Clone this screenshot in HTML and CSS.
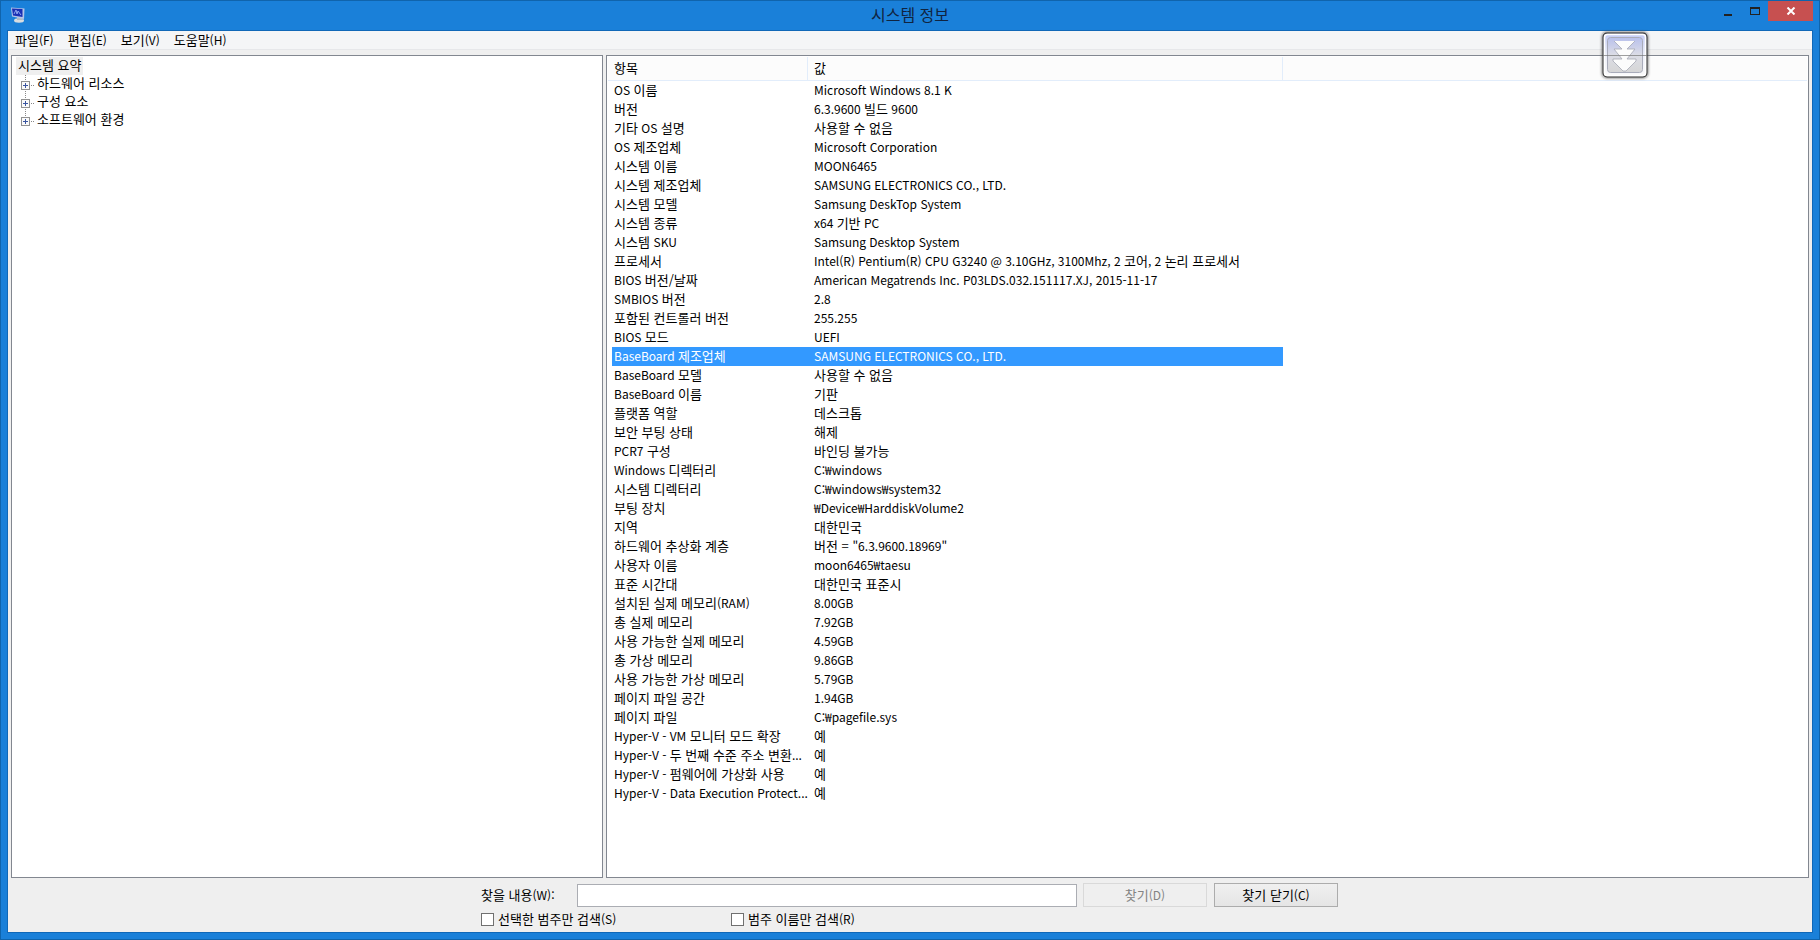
FILE: index.html
```html
<!DOCTYPE html>
<html lang="ko">
<head>
<meta charset="utf-8">
<title>시스템 정보</title>
<link rel="stylesheet" href="styles.css">
</head>
<body>
<div class="window">
  <header class="titlebar">
    <svg class="app-icon" width="16" height="18" viewBox="0 0 16 18" aria-hidden="true">
      <ellipse cx="9" cy="14.500" rx="5" ry="2.200" fill="#d9dde0"/>
      <path d="M7 10h5l1 4H7z" fill="#aeb9c4"/>
      <path d="M1 1.500L14.500 2.500 14 13 2 10.500z" fill="#b4c4e8"/>
      <path d="M2 2.500L12.500 3 12.500 11 3 9.500z" fill="#1a2fb4"/>
      <path d="M4 8l2-4 1 4 1-3 3 4" fill="none" stroke="#8fa6f0"/>
    </svg>
    <h1 class="title">시스템 정보</h1>
    <div class="controls">
      <button class="control" aria-label="최소화"><svg width="10" height="10" viewBox="0 0 10 10"><path d="M1 8h8v2H1z" fill="#222"/></svg></button>
      <button class="control" aria-label="최대화"><svg width="10" height="8" viewBox="0 0 10 8"><path d="M0 0h10v8H0zM1 2v5h8V2z" fill="#222" fill-rule="evenodd"/></svg></button>
      <button class="control close" aria-label="닫기"><svg width="10" height="8" viewBox="0 0 10 8"><path d="M1.500 .5l7 7M8.500 .5l-7 7" stroke="#fff" stroke-width="2"/></svg></button>
    </div>
  </header>
  <div class="client">
    <nav class="menu">
      <button class="menu-item">파일<span class="en">(F)</span></button>
      <button class="menu-item">편집<span class="en">(E)</span></button>
      <button class="menu-item">보기<span class="en">(V)</span></button>
      <button class="menu-item">도움말<span class="en">(H)</span></button>
    </nav>
    <main class="panes">
      <section class="pane tree">
        <span class="root">시스템 요약</span>
        <ul class="branches">
          <li class="branch"><button class="expander" aria-label="펼치기"></button><span class="branch-name">하드웨어 리소스</span></li>
          <li class="branch"><button class="expander" aria-label="펼치기"></button><span class="branch-name">구성 요소</span></li>
          <li class="branch"><button class="expander" aria-label="펼치기"></button><span class="branch-name">소프트웨어 환경</span></li>
        </ul>
      </section>
      <section class="pane details">
        <table class="info">
          <colgroup><col class="col-name"><col class="col-value"><col></colgroup>
          <thead><tr><th>항목</th><th>값</th><th></th></tr></thead>
          <tbody>
            <tr><td><div><span class="en">OS </span>이름</div></td><td class="en">Microsoft Windows 8.1 K</td></tr>
            <tr><td><div>버전</div></td><td><span class="en">6.3.9600 </span>빌드<span class="en"> 9600</span></td></tr>
            <tr><td><div>기타<span class="en"> OS </span>설명</div></td><td>사용할 수 없음</td></tr>
            <tr><td><div><span class="en">OS </span>제조업체</div></td><td class="en">Microsoft Corporation</td></tr>
            <tr><td><div>시스템 이름</div></td><td class="en">MOON6465</td></tr>
            <tr><td><div>시스템 제조업체</div></td><td class="en">SAMSUNG ELECTRONICS CO., LTD.</td></tr>
            <tr><td><div>시스템 모델</div></td><td class="en">Samsung DeskTop System</td></tr>
            <tr><td><div>시스템 종류</div></td><td><span class="en">x64 </span>기반<span class="en"> PC</span></td></tr>
            <tr><td><div>시스템 <span class="en">SKU</span></div></td><td class="en">Samsung Desktop System</td></tr>
            <tr><td><div>프로세서</div></td><td><span class="en">Intel(R) Pentium(R) CPU G3240 @ 3.10GHz, 3100Mhz, 2 </span>코어<span class="en">, 2 </span>논리 프로세서</td></tr>
            <tr><td><div><span class="en">BIOS </span>버전/날짜</div></td><td class="en">American Megatrends Inc. P03LDS.032.151117.XJ, 2015-11-17</td></tr>
            <tr><td><div><span class="en">SMBIOS </span>버전</div></td><td class="en">2.8</td></tr>
            <tr><td><div>포함된 컨트롤러 버전</div></td><td class="en">255.255</td></tr>
            <tr><td><div><span class="en">BIOS </span>모드</div></td><td class="en">UEFI</td></tr>
            <tr class="selected"><td><div><span class="en">BaseBoard </span>제조업체</div></td><td class="en">SAMSUNG ELECTRONICS CO., LTD.</td></tr>
            <tr><td><div><span class="en">BaseBoard </span>모델</div></td><td>사용할 수 없음</td></tr>
            <tr><td><div><span class="en">BaseBoard </span>이름</div></td><td>기판</td></tr>
            <tr><td><div>플랫폼 역할</div></td><td>데스크톱</td></tr>
            <tr><td><div>보안 부팅 상태</div></td><td>해제</td></tr>
            <tr><td><div><span class="en">PCR7 </span>구성</div></td><td>바인딩 불가능</td></tr>
            <tr><td><div><span class="en">Windows </span>디렉터리</div></td><td class="en">C:₩windows</td></tr>
            <tr><td><div>시스템 디렉터리</div></td><td class="en">C:₩windows₩system32</td></tr>
            <tr><td><div>부팅 장치</div></td><td class="en">₩Device₩HarddiskVolume2</td></tr>
            <tr><td><div>지역</div></td><td>대한민국</td></tr>
            <tr><td><div>하드웨어 추상화 계층</div></td><td>버전 = <span class="en">"6.3.9600.18969"</span></td></tr>
            <tr><td><div>사용자 이름</div></td><td class="en">moon6465₩taesu</td></tr>
            <tr><td><div>표준 시간대</div></td><td>대한민국 표준시</td></tr>
            <tr><td><div>설치된 실제 메모리<span class="en">(RAM)</span></div></td><td class="en">8.00GB</td></tr>
            <tr><td><div>총 실제 메모리</div></td><td class="en">7.92GB</td></tr>
            <tr><td><div>사용 가능한 실제 메모리</div></td><td class="en">4.59GB</td></tr>
            <tr><td><div>총 가상 메모리</div></td><td class="en">9.86GB</td></tr>
            <tr><td><div>사용 가능한 가상 메모리</div></td><td class="en">5.79GB</td></tr>
            <tr><td><div>페이지 파일 공간</div></td><td class="en">1.94GB</td></tr>
            <tr><td><div>페이지 파일</div></td><td class="en">C:₩pagefile.sys</td></tr>
            <tr><td><div><span class="en">Hyper-V - VM </span>모니터 모드 확장</div></td><td>예</td></tr>
            <tr><td><div><span class="en">Hyper-V - </span>두 번째 수준 주소 변환<span class="en">...</span></div></td><td>예</td></tr>
            <tr><td><div><span class="en">Hyper-V - </span>펌웨어에 가상화 사용</div></td><td>예</td></tr>
            <tr><td><div><span class="en">Hyper-V - Data Execution Protect...</span></div></td><td>예</td></tr>
          </tbody>
        </table>
      </section>
    </main>
    <form class="find">
      <div class="find-row">
        <label class="find-label" for="query">찾을 내용<span class="en">(W):</span></label>
        <input class="query" id="query" type="text">
        <button class="push" type="button" disabled>찾기<span class="en">(D)</span></button>
        <button class="push" type="button">찾기 닫기<span class="en">(C)</span></button>
      </div>
      <div class="options">
        <label class="option"><input type="checkbox">선택한 범주만 검색<span class="en">(S)</span></label>
        <label class="option"><input type="checkbox">범주 이름만 검색<span class="en">(R)</span></label>
      </div>
    </form>
  </div>
  <button class="scroll-badge" aria-label="아래로">
    <svg width="46" height="46" viewBox="0 0 46 46">
      <defs>
        <linearGradient id="face" x1="0" y1="0" x2="0" y2="1"><stop offset="0" stop-color="#b8c0ec"/><stop offset=".5" stop-color="#dcdde6"/><stop offset="1" stop-color="#d6d6d6"/></linearGradient>
        <linearGradient id="rim" x1="0" y1="0" x2="0" y2="1"><stop offset="0" stop-color="#c2caf6"/><stop offset=".5" stop-color="#eceef8"/><stop offset="1" stop-color="#fafafa"/></linearGradient>
      </defs>
      <rect x="1" y="1" width="44" height="44" rx="4" fill="url(#rim)" stroke="#444" stroke-width="1.500"/>
      <rect x="2.500" y="2.500" width="41" height="41" rx="3" fill="none" stroke="#fff" stroke-width="1.500"/>
      <rect x="5.500" y="5.500" width="35" height="35" rx="3" fill="url(#face)" stroke="#a9acba"/>
      <path d="M12 9h21l-8 8h8l-8 10h9v2L24 39h-3L11 29v-2h9l-8-10h8z" fill="#fcfcfc"/>
      <path d="M20 17l-8-8M25 17l8-8M20 27l-8-10h8M25 27l8-10h-8M20 27h-9v2l10 10h3l10-10v-2h-9" fill="none" stroke="#a6a8b4" stroke-width=".8"/>
      <path d="M1 23.500h44" stroke="#777" opacity=".7"/>
    </svg>
  </button>
</div>
</body>
</html>
```
FILE: styles.css
```css
* { box-sizing: border-box; }
body {
  margin: 0;
  font-family: "Noto Sans CJK KR", sans-serif;
  font-size: 13px;
  line-height: 18px;
  color: #000;
}
button, input { font: inherit; color: inherit; }
button { padding: 0; border: 0; background: none; }
.en { font-size: 12px; }
span.en { line-height: 1; white-space: pre; }
.window {
  position: relative;
  display: flex;
  flex-direction: column;
  height: 100vh;
  padding: 0 6px 6px;
  border: 1px solid #1064ac;
  background: #1a80d9;
}
.titlebar {
  display: grid;
  grid-template-columns: 1fr auto 1fr;
  height: 29px;
}
.app-icon { margin: 5px 3px; }
.title {
  margin: 0;
  font-size: 16px;
  font-weight: 400;
  line-height: 26px;
  color: #102440;
}
.controls { display: flex; justify-content: flex-end; }
.control {
  display: flex;
  align-items: center;
  justify-content: center;
  width: 27px;
  height: 20px;
}
.close { width: 45px; background: #c75050; }
.client {
  display: flex;
  flex: 1;
  flex-direction: column;
  min-height: 0;
  border: 1px solid #1068b8;
  background: #efefef;
}
.menu {
  display: flex;
  gap: 14px;
  height: 19px;
  padding: 0 7px;
  border-bottom: 1px solid #e6e7ea;
  background: #f4f5f7;
}
.panes {
  display: grid;
  flex: 1;
  grid-template-columns: 592fr 1203fr;
  gap: 3px;
  min-height: 0;
  padding: 5px 3px 0;
}
.pane { min-width: 0; overflow: hidden; border: 1px solid #828790; background: #fff; }
.tree { padding: 1px 4px; }
.root {
  display: block;
  width: fit-content;
  padding: 0 2px 2px;
  line-height: 16px;
  background: #efefef;
}
.branches {
  margin: 0 0 0 9px;
  padding: 0;
  list-style: none;
  background: repeating-linear-gradient(#888 0 1px, transparent 1px 2px) 0 0 / 1px 46px no-repeat;
}
.branch { display: flex; align-items: flex-start; height: 18px; }
.branch-name {
  padding-left: 7px;
  line-height: 16px;
  background: repeating-linear-gradient(90deg, transparent 0 1px, #888 1px 2px) 0 10px / 4px 1px no-repeat;
}
.expander {
  width: 9px;
  height: 9px;
  margin: 6px 0 0 -4px;
  border: 1px solid #919191;
  background:
    linear-gradient(#3a55a0, #3a55a0) center / 5px 1px no-repeat,
    linear-gradient(#3a55a0, #3a55a0) center / 1px 5px no-repeat,
    #fafafa;
}
.details { padding: 1px; }
.info { width: 100%; table-layout: fixed; border-spacing: 0; }
.col-name { width: 200px; }
.col-value { width: 475px; }
.info th {
  height: 24px;
  padding: 0 6px 2px;
  border-right: 1px solid #e2edfb;
  border-bottom: 1px solid #e2edfb;
  background: #fcfcfc;
  font-weight: 400;
  text-align: left;
}
.info th:last-child { border-right: 0; }
.info td {
  height: 19px;
  padding: 0 0 0 6px;
  line-height: 17px;
  vertical-align: top;
  white-space: nowrap;
}
.info td:first-child { padding-left: 4px; }
.info td div { height: 19px; padding-left: 2px; }
.selected { color: #fff; }
.selected td:last-child, .selected div { background: #3399ff; }
.find {
  width: 100%;
  max-width: 858px;
  height: 54px;
  margin: 0 auto;
  padding: 5px 1px 0 0;
}
.find-row { display: flex; align-items: center; }
.find-label { width: 96px; }
.query {
  flex: 1;
  min-width: 0;
  height: 23px;
  margin-right: 6px;
  border: 1px solid #abadb3;
  background: #fff;
}
.push {
  width: 124px;
  height: 24px;
  border: 1px solid #acacac;
  background: linear-gradient(#f0f0f0, #e5e5e5);
}
.push + .push { margin-left: 7px; }
.push:disabled { border-color: #d9d9d9; background: #efefef; color: #838383; }
.options { display: flex; margin-top: 3px; }
.option { display: flex; align-items: center; width: 250px; }
.option input {
  appearance: none;
  width: 13px;
  height: 13px;
  margin: 0 4px 0 0;
  border: 1px solid #707070;
  background: #fff;
}
.scroll-badge {
  position: absolute;
  top: 31px;
  right: 171px;
  height: 46px;
  border-radius: 5px;
  box-shadow: 0 0 3px #555;
}
```
